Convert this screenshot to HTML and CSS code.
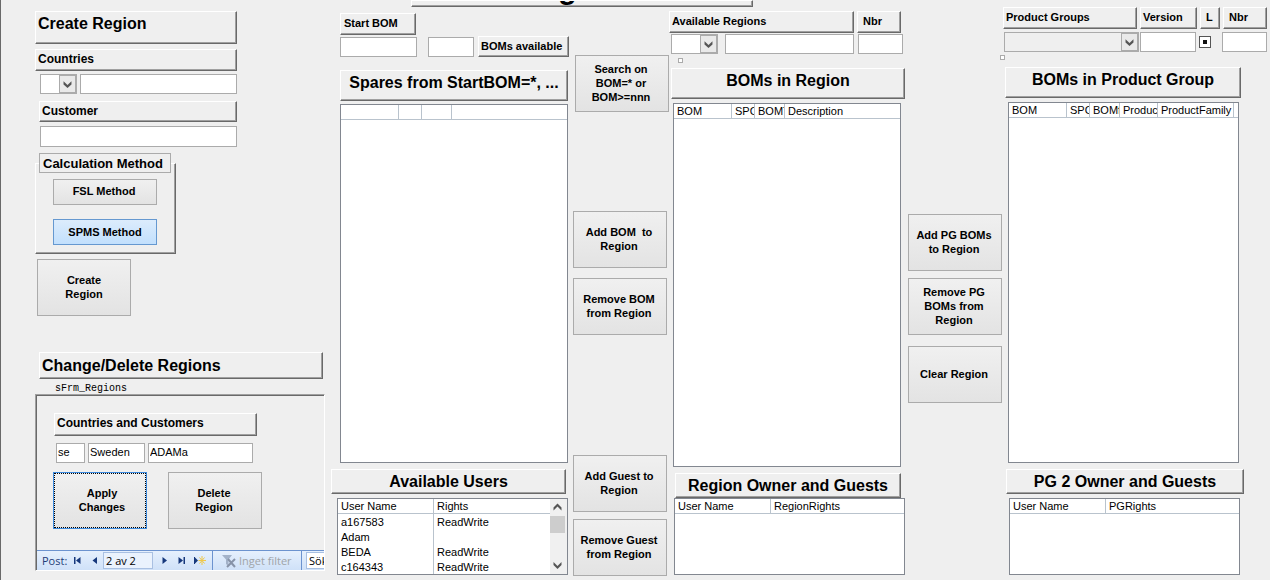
FILE: index.html
```html
<!DOCTYPE html>
<html lang="en">
<head>
<meta charset="utf-8">
<title>Region administration</title>
<link rel="stylesheet" href="styles.css">
</head>
<body>
<div class="form">
  <header class="titlebar"><h1 class="title raised">g</h1></header>
  <main class="columns">
    <section class="col col-create">
      <h2 class="raised head head-create">Create Region</h2>
      <label class="raised label countries" for="country">Countries</label>
      <div class="row country-row">
        <span class="combo combo-country"><select id="country"><option></option></select><svg class="drop" viewBox="0 0 17 18" aria-hidden="true"><path d="M4 6l4.500 4L13 6v3.500l-4.500 4-4.500-4z"/></svg></span>
        <input class="grow" type="text" aria-label="Country name">
      </div>
      <label class="raised label customer" for="customer">Customer</label>
      <input class="customer-input" id="customer" type="text">
      <fieldset class="method raised">
        <legend>Calculation Method</legend>
        <button type="button" class="toggle">FSL Method</button>
        <button type="button" class="toggle toggle-on" aria-pressed="true">SPMS Method</button>
      </fieldset>
      <button type="button" class="btn btn-create">Create<br>Region</button>
      <h2 class="raised head head-change">Change/Delete Regions</h2>
      <div class="caption">sFrm_Regions</div>
      <section class="subform">
        <h3 class="raised label sub-label">Countries and Customers</h3>
        <div class="row sub-fields">
          <input class="code" type="text" value="se" aria-label="Country code">
          <input class="name" type="text" value="Sweden" aria-label="Country">
          <input class="cust" type="text" value="ADAMa" aria-label="Customer">
        </div>
        <div class="row sub-buttons">
          <button type="button" class="btn btn-focus">Apply<br>Changes</button>
          <button type="button" class="btn">Delete<br>Region</button>
        </div>
        <nav class="recnav" aria-label="Records">
          <label for="rec">Post:</label>
          <button type="button" aria-label="First"><svg viewBox="0 0 9 9"><path d="M1 1h1.500v7H1zM7.500 1v7L3 4.500z"/></svg></button>
          <button type="button" aria-label="Previous"><svg viewBox="0 0 9 9"><path d="M7 1v7L2.500 4.500z"/></svg></button>
          <input id="rec" type="text" value="2 av 2">
          <button type="button" class="next" aria-label="Next"><svg viewBox="0 0 9 9"><path d="M2.500 1v7L7 4.500z"/></svg></button>
          <button type="button" aria-label="Last"><svg viewBox="0 0 9 9"><path d="M6.500 1H8v7H6.500zM1.500 1v7L6 4.500z"/></svg></button>
          <button type="button" class="new" aria-label="New"><svg viewBox="0 0 12 9"><path d="M0 1h1v7H0zM1 1.500v6L4 4.500z"/><path class="star" d="M8 0v9M4.500 4.500H12M5.500 1.500l5 6M10.500 1.500l-5 6"/></svg></button>
          <span class="filter"><svg viewBox="0 0 16 14" aria-hidden="true"><path d="M1 1h10L7.500 5.500V12L5 10V5.500z"/><path class="cross" d="M6 13l8-8M7 5l7 8"/></svg>Inget filter</span>
          <input class="find" type="text" value="Sök" aria-label="Search">
        </nav>
      </section>
    </section>

    <section class="col col-spares">
      <label class="raised label start" for="start">Start BOM</label>
      <div class="row start-row">
        <input class="start-input grow" id="start" type="text">
        <input class="count-input" id="avail" type="text">
        <label class="raised label" for="avail">BOMs available</label>
      </div>
      <h2 class="raised head head-big spares-head">Spares from StartBOM=*, ...</h2>
      <div class="list spares-list">
        <table><thead><tr><th class="w57"></th><th class="w23"></th><th class="w30"></th><th></th></tr></thead></table>
      </div>
      <h2 class="raised head head-low users-head">Available Users</h2>
      <div class="list list-low users-list">
        <table>
          <thead><tr><th class="w95">User Name</th><th>Rights</th></tr></thead>
          <tbody>
            <tr><td>a167583</td><td>ReadWrite</td></tr>
            <tr><td>Adam</td><td></td></tr>
            <tr><td>BEDA</td><td>ReadWrite</td></tr>
            <tr><td>c164343</td><td>ReadWrite</td></tr>
          </tbody>
        </table>
        <div class="scroll">
          <button type="button" aria-label="Scroll up"><svg viewBox="0 0 15 17"><path d="M3.500 11.500l4-4 4 4V8.500l-4-4-4 4z"/></svg></button>
          <span class="thumb"></span>
          <button type="button" class="down" aria-label="Scroll down"><svg viewBox="0 0 15 17"><path d="M3.500 5l4 4 4-4v3l-4 4-4-4z"/></svg></button>
        </div>
      </div>
    </section>

    <section class="col col-actions">
      <button type="button" class="btn btn-search">Search on<br>BOM=* or<br>BOM&gt;=nnn</button>
      <button type="button" class="btn btn-add">Add BOM&nbsp; to<br>Region</button>
      <button type="button" class="btn btn-remove">Remove BOM<br>from Region</button>
      <button type="button" class="btn btn-guest">Add Guest to<br>Region</button>
      <button type="button" class="btn btn-unguest">Remove Guest<br>from Region</button>
    </section>

    <section class="col col-region">
      <div class="row region-labels">
        <label class="raised label grow" for="region">Available Regions</label>
        <label class="raised label nbr" for="region-nbr">Nbr</label>
      </div>
      <div class="row region-fields">
        <span class="combo combo-region"><select id="region"><option></option></select><svg class="drop" viewBox="0 0 17 18" aria-hidden="true"><path d="M4 6l4.500 4L13 6v3.500l-4.500 4-4.500-4z"/></svg></span>
        <input class="grow" type="text" aria-label="Region name">
        <input class="nbr-input" id="region-nbr" type="text">
      </div>
      <span class="tick"></span>
      <h2 class="raised head head-big region-head">BOMs in Region</h2>
      <div class="list region-list">
        <table><thead><tr><th class="w57">BOM</th><th class="w23">SPC</th><th class="w30">BOMT</th><th>Description</th></tr></thead></table>
      </div>
      <h2 class="raised head head-low owner-head">Region Owner and Guests</h2>
      <div class="list list-low owner-list">
        <table><thead><tr><th class="w95">User Name</th><th>RegionRights</th></tr></thead></table>
      </div>
    </section>

    <section class="col col-actions col-pg-actions">
      <button type="button" class="btn btn-pg-add">Add PG BOMs<br>to Region</button>
      <button type="button" class="btn btn-pg-remove">Remove PG<br>BOMs from<br>Region</button>
      <button type="button" class="btn btn-clear">Clear Region</button>
    </section>

    <section class="col col-group">
      <div class="row group-labels">
        <label class="raised label grow" for="group">Product Groups</label>
        <label class="raised label version" for="version">Version</label>
        <label class="raised label latest" for="latest">L</label>
        <label class="raised label nbr" for="group-nbr">Nbr</label>
      </div>
      <div class="row group-fields">
        <span class="combo combo-grey grow"><select id="group"><option></option></select><svg class="drop" viewBox="0 0 17 18" aria-hidden="true"><path d="M4 6l4.500 4L13 6v3.500l-4.500 4-4.500-4z"/></svg></span>
        <input class="version-input" id="version" type="text">
        <input class="check" id="latest" type="checkbox" checked>
        <input class="nbr-input" id="group-nbr" type="text">
      </div>
      <span class="tick"></span>
      <h2 class="raised head head-big group-head">BOMs in Product Group</h2>
      <div class="list group-list">
        <table><thead><tr><th class="w57">BOM</th><th class="w23">SPC</th><th class="w30">BOMf</th><th class="w38">Product</th><th>ProductFamily</th><th class="w5"></th></tr></thead></table>
      </div>
      <h2 class="raised head head-low pg-head">PG 2 Owner and Guests</h2>
      <div class="list list-low pg-list">
        <table><thead><tr><th class="w95">User Name</th><th>PGRights</th></tr></thead></table>
      </div>
    </section>
  </main>
</div>
</body>
</html>
```
FILE: styles.css
```css
* { box-sizing: border-box; }
body {
  margin: 0;
  background: #efefef;
  color: #000;
  font: 11px/14px "Liberation Sans", Arial, sans-serif;
}
button, input, select { font: inherit; color: inherit; margin: 0; }
h1, h2, h3 { margin: 0; }

.form {
  display: flex;
  flex-direction: column;
  min-height: 100vh;
  border-left: 1px solid #696969;
}
.titlebar { height: 7px; padding: 0 517px 0 410px; }
.title {
  display: flex;
  align-items: flex-end;
  justify-content: center;
  height: 7px;
  overflow: hidden;
  padding: 0 29px 1px 0;
  border-top: 0;
  font-size: 30px;
  line-height: 32px;
}
.columns {
  flex: 1;
  display: grid;
  grid-template-columns:
    minmax(0, 330fr) minmax(0, 240fr) minmax(98px, 100fr)
    minmax(0, 234fr) minmax(97px, 98fr) minmax(0, 267fr);
}
.col { display: flex; flex-direction: column; padding-bottom: 5px; min-width: 0; }
.row { display: flex; }
.grow { flex: 1; min-width: 0; }

.raised {
  border: 1px solid #fff;
  border-right-color: #696969;
  border-bottom-color: #696969;
  box-shadow: inset -1px -1px 0 #a0a0a0;
}
.label { display: block; height: 22px; padding: 2px; font-size: 11px; font-weight: bold; white-space: nowrap; }
.head { font-size: 16px; line-height: 20px; font-weight: bold; white-space: nowrap; }
.head-big { height: 31px; padding-top: 2px; text-align: center; }
.head-low { height: 25px; padding-top: 2px; text-align: center; }

input[type="text"], select {
  height: 20px;
  min-width: 0;
  padding: 0 2px;
  border: 1px solid #ababab;
  border-radius: 0;
  background: #fff;
}
.combo { position: relative; display: block; height: 20px; }
.combo select { appearance: none; width: 100%; display: block; }
.combo-grey select { background: #efefef; }
.drop {
  position: absolute;
  top: 1px;
  right: 1px;
  width: 17px;
  height: 18px;
  border: 1px solid #ababab;
  background: #e9e9e9;
  fill: #555;
  pointer-events: none;
}
.tick { display: block; width: 5px; height: 5px; border: 1px solid #ababab; background: #fff; }

.btn, .toggle {
  border: 1px solid #ababab;
  border-radius: 0;
  padding: 0 2px 2px 0;
  background: linear-gradient(#f0f0f0, #e3e3e3);
  font-weight: bold;
  white-space: nowrap;
}
.btn { width: 94px; height: 57px; flex: none; }
.btn-create { padding-right: 0; }
.btn-focus { padding: 0 0 2px 4px; border-color: #3c8ade; outline: 1px dotted #000; outline-offset: -2px; }
.toggle { display: block; width: 104px; height: 26px; }
.toggle-on { padding: 0; border-color: #6598d0; background: linear-gradient(#dcecfc, #c2e0fd); }

/* Create and change regions */
.head-create { height: 33px; margin: 4px 94px 0 34px; padding: 2px; }
.countries { margin: 5px 94px 0 34px; font-size: 12px; }
.country-row { margin: 3px 94px 0 39px; gap: 3px; }
.combo-country { width: 37px; }
.customer { height: 21px; margin: 7px 94px 0 38px; font-size: 12px; }
input.customer-input { height: 21px; margin: 4px 94px 0 39px; }
.method {
  width: 141px;
  height: 101px;
  margin: 6px 0 0 34px;
  padding: 6px 17px 0;
  min-width: 0;
}
.method legend {
  width: 132px;
  height: 20px;
  margin: 0 -14px;
  padding: 3px;
  border: 1px solid #ababab;
  background: #efefef;
  font-size: 13px;
  font-weight: bold;
  white-space: nowrap;
}
.toggle-on { margin-top: 14px; }
.btn-create { margin: 5px 0 0 36px; }
.head-change { height: 27px; margin: 36px 8px 0 38px; padding: 3px 2px; }
.caption { margin: 4px 0 0 54px; font: 10px/11px "Liberation Mono", monospace; }
.subform {
  display: flex;
  flex-direction: column;
  height: 177px;
  margin: 0 6px 0 34px;
  border: 1px solid #fff;
  border-top-color: #a0a0a0;
  border-left-color: #a0a0a0;
  box-shadow: inset 1px 1px 0 #696969;
  overflow: hidden;
}
.sub-label { width: 203px; height: 23px; margin: 18px 0 0 18px; font-size: 12px; }
.sub-fields { gap: 3px; margin: 7px 0 0 20px; }
.sub-fields input { padding: 0 1px 3px; }
.code { width: 29px; }
.name { width: 57px; }
.cust { width: 105px; }
.sub-buttons { gap: 21px; margin: 9px 0 0 17px; }
.recnav {
  display: flex;
  align-items: center;
  height: 20px;
  margin: auto 0 0 1px;
  padding-left: 5px;
  border-top: 1px solid #6c93cf;
  background: linear-gradient(#e6f0fd, #cfe1f8);
  color: #1e3c78;
  font: 11px/16px "Open Sans", "Noto Sans", sans-serif;
}
.recnav label { width: 27px; flex: none; }
.recnav button { flex: none; width: 17px; height: 18px; padding: 0 4px; border: 0; background: none; }
.recnav svg { display: block; width: 9px; height: 9px; fill: #16387c; }
.recnav .next { margin-left: 3px; }
.recnav .new { width: 20px; }
.recnav .new svg { width: 12px; }
.recnav .star { stroke: #efc84a; fill: none; }
.recnav input[type="text"] { flex: none; width: 50px; height: 17px; border-color: #a9c0e2; background: #eaf2fd; color: #000; }
.recnav .filter {
  display: flex;
  align-items: center;
  gap: 2px;
  height: 19px;
  flex: none;
  width: 90px;
  margin-left: 2px;
  padding-left: 8px;
  border: 1px solid #6c93cf;
  border-width: 0 1px;
  color: #a0a4a8;
}
.recnav .filter svg { width: 16px; height: 14px; fill: #a3b2c9; }
.recnav .cross { stroke: #8793a8; stroke-width: 2; }
.recnav input.find[type="text"] { flex: 1; padding: 0 0 0 2px; margin-left: 4px; border-right: 0; background: #fff; }

/* Spares and users */
.start { width: 76px; margin: 6px 0 0 9px; padding-left: 3px; }
.start-row { margin: 2px 2px 0 9px; }
.count-input { width: 46px; margin: 0 4px 0 11px; }
.start-row .label { flex: none; height: 21px; width: 91px; margin-top: -1px; }
.spares-head { margin: 13px 3px 0 9px; }

/* Lists */
.list { position: relative; flex: 1; border: 1px solid #828790; background: #fff; overflow: hidden; }
.list table { width: 100%; border-spacing: 0; table-layout: fixed; }
.list th, .list td {
  height: 15px;
  padding: 0 0 0 3px;
  border-left: 1px solid #b9c3cd;
  font-weight: normal;
  line-height: 14px;
  text-align: left;
  white-space: nowrap;
  overflow: hidden;
}
.list th { border-bottom: 1px solid #b9c3cd; }
.list th:first-child, .list td:first-child { border-left: 0; }
.list-low { flex: none; height: 77px; }
.w57 { width: 57px; }
.w23 { width: 23px; }
.w30 { width: 30px; }
.w38 { width: 38px; }
.w95 { width: 95px; }
.w5 { width: 5px; }
.spares-list { margin: 3px 3px 0 9px; }
.users-head { margin: 6px 5px 0 0; }
.users-list { display: flex; margin: 4px 3px 0 6px; }
.scroll { flex: none; display: flex; flex-direction: column; width: 17px; background: #f0f0f0; }
.scroll button { width: 15px; height: 17px; padding: 0; border: 0; background: none; }
.scroll svg { display: block; width: 15px; height: 17px; fill: #555; }
.scroll .thumb { height: 17px; margin-right: 2px; background: #cdcdcd; }
.scroll .down { margin-top: auto; }

/* Action buttons */
.col-actions { align-items: center; padding: 0 2px 4px 0; }
.btn-search { margin: 48px 0 0 4px; }
.btn-add { margin-top: 99px; }
.btn-remove { margin-top: 10px; }
.btn-guest { margin-top: auto; }
.btn-unguest { margin-top: 7px; }
.col-pg-actions { padding: 0 0 4px 2px; }
.btn-pg-add { margin-top: 207px; }
.btn-pg-remove { margin-top: 7px; }
.btn-clear { margin-top: 11px; }

/* Region */
.region-labels { gap: 3px; margin: 4px 4px 0 -2px; }
.nbr { width: 44px; padding-left: 5px; }
.region-fields { margin: 1px 2px 0 0; gap: 4px; }
.combo-region { width: 47px; margin-right: 3px; }
.nbr-input { width: 45px; }
.col-region .tick { margin: 4px 0 0 7px; }
.region-head { margin-top: 5px; }
.region-list { margin: 4px 4px 0 2px; }
.owner-head { margin: 6px 4px 0 4px; }
.owner-list { margin: 0 0 0 3px; }

/* Product group */
.group-labels { gap: 3px; margin-right: 3px; }
.version { width: 57px; }
.latest { width: 20px; padding-left: 5px; }
.group-fields { align-items: center; margin: 3px 3px 0 1px; }
.version-input { width: 56px; margin: 0 3px 0 1px; }
.check {
  appearance: none;
  display: grid;
  place-content: center;
  width: 12px;
  height: 12px;
  margin: 0 11px 0 0;
  border: 1px solid #555;
  background: #fff;
}
.check:checked::before { content: ""; width: 4px; height: 4px; background: #111; }
.col-group .tick { margin: 3px 0 0 -3px; }
.group-head { margin: 7px 29px 0 2px; }
.group-list { margin: 4px 31px 0 5px; }
.pg-head { margin: 6px 26px 0 3px; }
.pg-list { margin: 4px 30px 0 6px; }
```
